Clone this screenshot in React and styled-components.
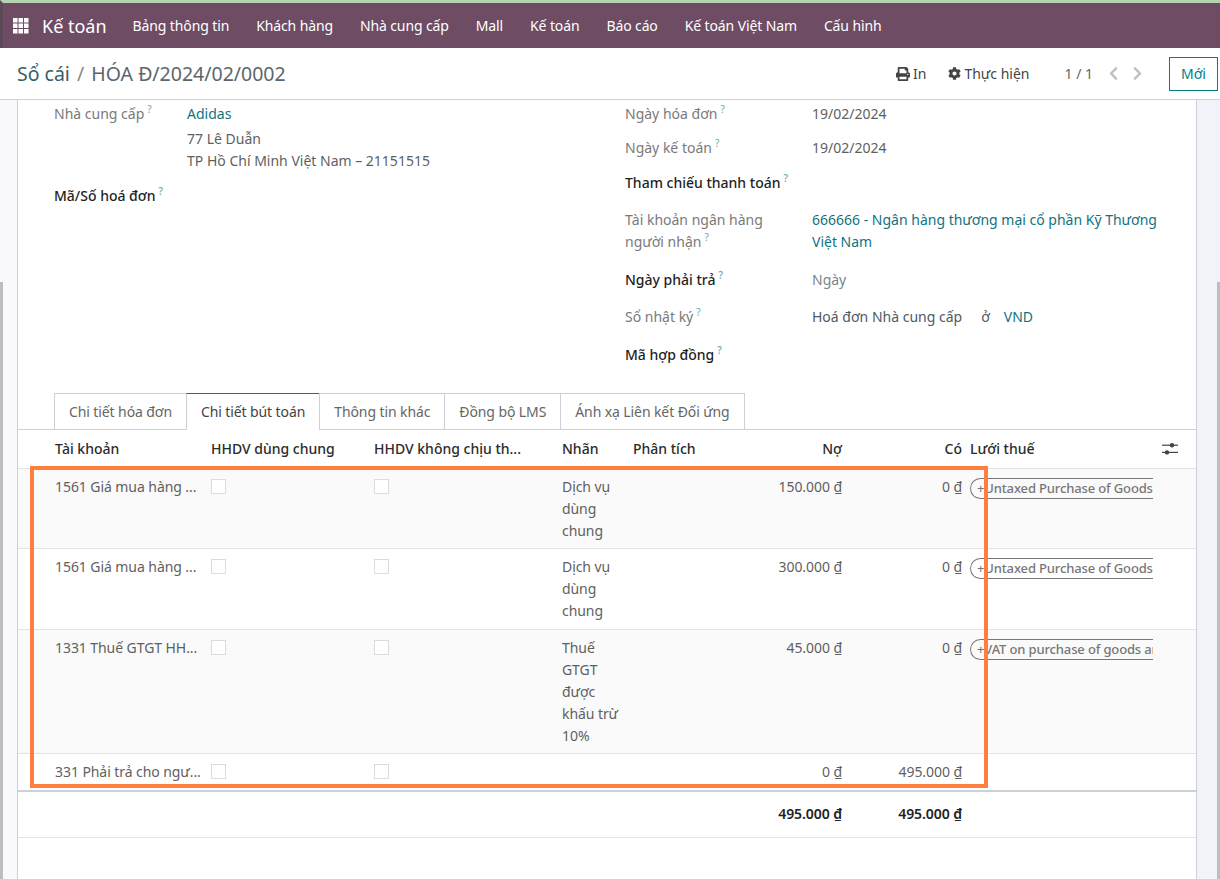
import styled, { createGlobalStyle } from "styled-components";
import { FaPrint, FaCog, FaChevronLeft, FaChevronRight } from "react-icons/fa";

const GlobalStyle = createGlobalStyle`
	html, body {
		margin: 0;
		padding: 0;
		height: 879px;
		overflow: hidden;
		background: #fff;
		font-family: "Noto Sans", "Liberation Sans", sans-serif;
		font-size: 14px;
	}
`;

const Page = styled.div`
	position: relative;
	width: 1220px;
	height: 879px;
	overflow: hidden;
	display: flex;
	flex-direction: column;
`;

const Navbar = styled.header`
	display: flex;
	align-items: center;
	height: 48px;
	box-sizing: border-box;
	flex-shrink: 0;
	border-top: 3px solid #b5d3b0;
	border-left: 3px solid #5d4a59;
	background: #6e4c64;
	padding-left: 10px;
	color: #fff;
`;

const AppsIcon = styled.svg`
	width: 16px;
	height: 16px;
	margin-right: 13px;
	fill: #fff;
`;

const Brand = styled.span`
	font-size: 18px;
	margin-right: 26px;
`;

const NavItem = styled.span`
	font-size: 14px;
	letter-spacing: -0.12px;
	margin-right: 27px;
`;

const ControlPanel = styled.div`
	display: flex;
	align-items: center;
	height: 52px;
	flex-shrink: 0;
	padding: 0 2px 0 17px;
	border-bottom: 1px solid #d0d0d0;
	box-sizing: border-box;
`;

const Breadcrumb = styled.div`
	flex: 1;
	font-size: 19.5px;
	color: #5a666c;
`;

const CrumbLink = styled.span`
	color: #35606a;
`;

const CrumbSlash = styled.span`
	margin: 0 2px;
	color: #8a8a8a;
`;

const ActionItem = styled.span`
	display: flex;
	align-items: center;
	gap: 3px;
	font-size: 14px;
	color: #444;
	margin-right: ${(props) => props.$gap}px;
`;

const Pager = styled.span`
	font-size: 14px;
	color: #666;
	margin-right: 13px;
`;

const PagerArrow = styled.span`
	display: flex;
	color: #c0c0c0;
	font-size: 15px;
	margin-right: ${(props) => props.$gap}px;
`;

const NewButton = styled.button`
	width: 49px;
	height: 34px;
	background: #fff;
	border: 1px solid #017e84;
	color: #017e84;
	font: inherit;
	font-size: 14px;
	padding: 0;
`;

const Content = styled.div`
	flex: 1;
	display: flex;
	min-height: 0;
`;

const Gutter = styled.div`
	background-color: ${(props) => props.$color};
	background-image: linear-gradient(#bdbdbd, #bdbdbd);
	background-repeat: no-repeat;
	background-size: 3px 100%;
	background-position: ${(props) => props.$side} 182px;
	width: ${(props) => props.$width}px;
	flex-shrink: 0;
`;

const Sheet = styled.main`
	width: 1180px;
	flex-shrink: 0;
	box-sizing: border-box;
	border-left: 1px solid #ccd0d8;
	border-right: 1px solid #ccd0d8;
	background: #fff;
`;

const FormGrid = styled.div`
	display: grid;
	grid-template-columns: 571px 1fr;
	height: 293px;
	padding-left: 36px;
`;

const FormColumn = styled.div`
	display: flex;
	flex-direction: column;
`;

const FieldRow = styled.div`
	display: grid;
	grid-template-columns: ${(props) => props.$labelWidth}px 345px;
	height: ${(props) => props.$height}px;
	line-height: 22px;
`;

const Label = styled.div`
	color: ${(props) => (props.$strong ? "#1f1f1f" : "#7a7a7a")};
	font-weight: ${(props) => (props.$strong ? 500 : 400)};
	padding-top: ${(props) => props.$top || 0}px;
`;

const Hint = styled.sup`
	font-size: 10px;
	line-height: 0;
	color: #6aa7b0;
	margin-left: 3px;
`;

const Value = styled.div`
	color: ${(props) => props.$color || "#5f5f5f"};
	padding-top: ${(props) => props.$top || 0}px;
`;

const LinkValue = styled.span`
	color: #0f7480;
`;

const VendorName = styled(LinkValue)`
	display: block;
	margin-bottom: 3px;
`;

const JournalSep = styled.span`
	margin: 0 14px 0 19px;
`;

const Tabs = styled.div`
	display: flex;
	height: 37px;
	box-sizing: border-box;
	padding-left: 36px;
	border-bottom: 1px solid #ccd0d8;
`;

const Tab = styled.div`
	height: ${(props) => (props.$active ? 37 : 36)}px;
	box-sizing: border-box;
	padding: 0 14px;
	line-height: 35px;
	letter-spacing: -0.1px;
	white-space: nowrap;
	color: ${(props) => (props.$active ? "#444" : "#666")};
	border: 1px solid #ccd0d8;
	border-top-color: ${(props) => (props.$active ? "#6e4c64" : "#ccd0d8")};
	border-bottom: none;
	background: #fff;
	margin-right: -1px;
`;

const Row = styled.div`
	display: grid;
	grid-template-columns: 156px 163px 188px 71px 90px 119px 120px 191px 1fr;
	height: ${(props) => props.$height}px;
	box-sizing: border-box;
	padding-left: 37px;
	border-bottom: 1px solid #e3e3e3;
	background: ${(props) => (props.$shaded ? "#fafafa" : "#fff")};
	color: #5f5f5f;
	line-height: 22px;
`;

const HeadCell = styled.div`
	padding-top: 8px;
	padding-left: ${(props) => props.$indent || 0}px;
	font-weight: 500;
	color: #2b2b2b;
	white-space: nowrap;
	text-align: ${(props) => (props.$right ? "right" : "left")};
`;

const Cell = styled.div`
	padding-top: 7px;
	padding-right: ${(props) => (props.$wrap ? 8 : 0)}px;
	text-align: ${(props) => (props.$right ? "right" : "left")};
	white-space: ${(props) => (props.$wrap ? "normal" : "nowrap")};
	letter-spacing: -0.07px;
	overflow: hidden;
`;

const TotalCell = styled(Cell)`
	padding-top: 11px;
	font-weight: 600;
	color: #222;
`;

const CheckBox = styled.span`
	display: block;
	width: 13px;
	height: 13px;
	margin-top: 3px;
	border: 1px solid #dcdcdc;
	background: #fff;
`;

const TaxCell = styled.div`
	padding: 9px 0 0 8px;
	width: 183px;
	overflow: hidden;
`;

const TaxTag = styled.div`
	display: flex;
	align-items: center;
	width: 240px;
	height: 21px;
	box-sizing: border-box;
	border: 1px solid #777;
	border-right: none;
	border-radius: 11px 0 0 11px;
	padding-left: 6px;
	font-size: 13px;
	font-weight: 500;
	letter-spacing: -0.14px;
	line-height: 19px;
	color: #777;
	white-space: nowrap;
	overflow: hidden;
`;

const TagPlus = styled.span`
	font-weight: 400;
`;

const OptionsIcon = styled.svg`
	width: 16px;
	height: 16px;
	margin: 11px 0 0 9px;
	fill: #444;
`;

const TotalsSeparator = styled.div`
	height: 2px;
	background: #ccd0d8;
	margin-top: -1px;
`;

/* the orange frame is drawn on top of the screenshot */
const Highlight = styled.div`
	position: absolute;
	left: 30px;
	top: 466px;
	width: 958px;
	height: 322px;
	box-sizing: border-box;
	border: 4px solid #ff7f41;
	pointer-events: none;
`;

const menuItems = ["Bảng thông tin", "Khách hàng", "Nhà cung cấp", "Mall", "Kế toán", "Báo cáo", "Kế toán Việt Nam", "Cấu hình"];
const tabs = ["Chi tiết hóa đơn", "Chi tiết bút toán", "Thông tin khác", "Đồng bộ LMS", "Ánh xạ Liên kết Đối ứng"];

const lines = [
	{ account: "1561 Giá mua hàng ...", label: "Dịch vụ dùng chung", debit: "150.000 ₫", credit: "0 ₫", tax: "Untaxed Purchase of Goods", height: 80, shaded: true },
	{ account: "1561 Giá mua hàng ...", label: "Dịch vụ dùng chung", debit: "300.000 ₫", credit: "0 ₫", tax: "Untaxed Purchase of Goods", height: 81, shaded: false },
	{ account: "1331 Thuế GTGT HH...", label: "Thuế GTGT được khấu trừ 10%", debit: "45.000 ₫", credit: "0 ₫", tax: "VAT on purchase of goods and services", height: 124, shaded: true },
	{ account: "331 Phải trả cho ngư...", label: "", debit: "0 ₫", credit: "495.000 ₫", tax: null, height: 37, shaded: false },
];

function App() {
	return (
		<Page>
			<GlobalStyle />
			<Navbar>
				<AppsIcon viewBox="0 0 16 16">
					{[0, 5.5, 11].map((y) => [0, 5.5, 11].map((x) => <rect key={`${x}-${y}`} x={x} y={y} width="4.5" height="4.5" />))}
				</AppsIcon>
				<Brand>Kế toán</Brand>
				{menuItems.map((item) => (
					<NavItem key={item}>{item}</NavItem>
				))}
			</Navbar>

			<ControlPanel>
				<Breadcrumb>
					<CrumbLink>Sổ cái</CrumbLink>
					<CrumbSlash> / </CrumbSlash>
					HÓA Đ/2024/02/0002
				</Breadcrumb>
				<ActionItem $gap={22}>
					<FaPrint size={14} />
					In
				</ActionItem>
				<ActionItem $gap={35}>
					<FaCog size={13} />
					Thực hiện
				</ActionItem>
				<Pager>1 / 1</Pager>
				<PagerArrow $gap={9}>
					<FaChevronLeft />
				</PagerArrow>
				<PagerArrow $gap={24}>
					<FaChevronRight />
				</PagerArrow>
				<NewButton>Mới</NewButton>
			</ControlPanel>

			<Content>
				<Gutter $color="#f9f9fb" $side="left" $width={17} />
				<Sheet>
					<FormGrid>
						<FormColumn>
							<FieldRow $labelWidth={133} $height={85}>
								<Label $top={3}>
									Nhà cung cấp<Hint>?</Hint>
								</Label>
								<Value $top={3}>
									<VendorName>Adidas</VendorName>
									77 Lê Duẫn
									<br />
									TP Hồ Chí Minh Việt Nam – 21151515
								</Value>
							</FieldRow>
							<FieldRow $labelWidth={133} $height={40}>
								<Label $strong>
									Mã/Số hoá đơn<Hint>?</Hint>
								</Label>
								<Value />
							</FieldRow>
						</FormColumn>
						<FormColumn>
							<FieldRow $labelWidth={187} $height={34}>
								<Label $top={3}>
									Ngày hóa đơn<Hint>?</Hint>
								</Label>
								<Value $top={3}>19/02/2024</Value>
							</FieldRow>
							<FieldRow $labelWidth={187} $height={35}>
								<Label $top={3}>
									Ngày kế toán<Hint>?</Hint>
								</Label>
								<Value $top={3}>19/02/2024</Value>
							</FieldRow>
							<FieldRow $labelWidth={187} $height={40}>
								<Label $top={3} $strong>
									Tham chiếu thanh toán<Hint>?</Hint>
								</Label>
								<Value />
							</FieldRow>
							<FieldRow $labelWidth={187} $height={60}>
								<Label>
									Tài khoản ngân hàng
									<br />
									người nhận<Hint>?</Hint>
								</Label>
								<Value>
									<LinkValue>666666 - Ngân hàng thương mại cổ phần Kỹ Thương Việt Nam</LinkValue>
								</Value>
							</FieldRow>
							<FieldRow $labelWidth={187} $height={37}>
								<Label $strong>
									Ngày phải trả<Hint>?</Hint>
								</Label>
								<Value $color="#7d838a">Ngày</Value>
							</FieldRow>
							<FieldRow $labelWidth={187} $height={38}>
								<Label>
									Sổ nhật ký<Hint>?</Hint>
								</Label>
								<Value $color="#4d5a66">
									Hoá đơn Nhà cung cấp
									<JournalSep>ở</JournalSep>
									<LinkValue>VND</LinkValue>
								</Value>
							</FieldRow>
							<FieldRow $labelWidth={187} $height={30}>
								<Label $strong>
									Mã hợp đồng<Hint>?</Hint>
								</Label>
								<Value />
							</FieldRow>
						</FormColumn>
					</FormGrid>

					<Tabs>
						{tabs.map((tab, index) => (
							<Tab key={tab} $active={index === 1}>
								{tab}
							</Tab>
						))}
					</Tabs>

					<Row $height={39}>
						<HeadCell>Tài khoản</HeadCell>
						<HeadCell>HHDV dùng chung</HeadCell>
						<HeadCell>HHDV không chịu th...</HeadCell>
						<HeadCell>Nhãn</HeadCell>
						<HeadCell>Phân tích</HeadCell>
						<HeadCell $right>Nợ</HeadCell>
						<HeadCell $right>Có</HeadCell>
						<HeadCell $indent={8}>Lưới thuế</HeadCell>
						<OptionsIcon viewBox="0 0 16 16">
							<rect x="0" y="3.6" width="16" height="1.2" />
							<rect x="0" y="10.8" width="16" height="1.2" />
							<circle cx="10" cy="4.2" r="2.2" />
							<circle cx="5" cy="11.4" r="2.2" />
						</OptionsIcon>
					</Row>

					{lines.map((line, index) => (
						<Row key={index} $height={line.height} $shaded={line.shaded}>
							<Cell>{line.account}</Cell>
							<Cell>
								<CheckBox />
							</Cell>
							<Cell>
								<CheckBox />
							</Cell>
							<Cell $wrap>{line.label}</Cell>
							<Cell />
							<Cell $right>{line.debit}</Cell>
							<Cell $right>{line.credit}</Cell>
							{line.tax ? (
								<TaxCell>
									<TaxTag>
										<TagPlus>+</TagPlus>
										{line.tax}
									</TaxTag>
								</TaxCell>
							) : (
								<Cell />
							)}
						</Row>
					))}

					<TotalsSeparator />

					<Row $height={46}>
						<Cell />
						<Cell />
						<Cell />
						<Cell />
						<Cell />
						<TotalCell $right>495.000 ₫</TotalCell>
						<TotalCell $right>495.000 ₫</TotalCell>
						<Cell />
					</Row>
				</Sheet>
				<Gutter $color="#f2f3f8" $side="right" $width={23} />
			</Content>

			<Highlight />
		</Page>
	);
}

export default App;
